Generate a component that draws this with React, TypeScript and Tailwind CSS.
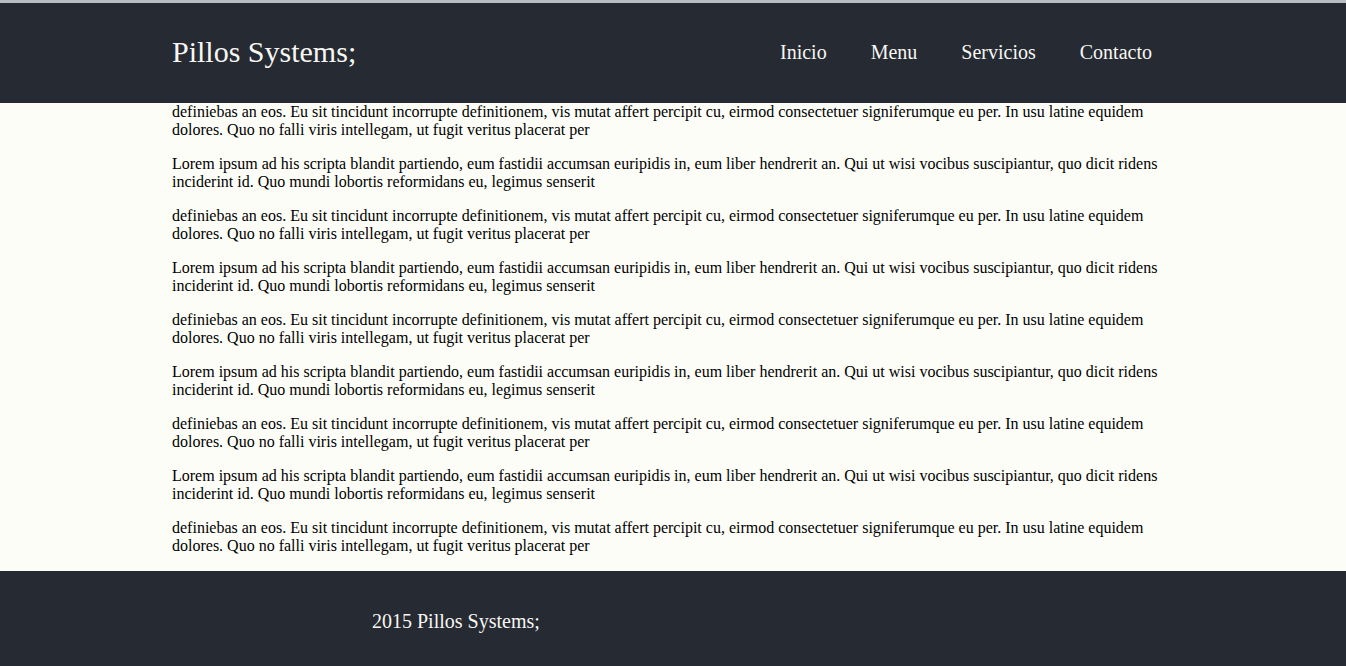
const paraA =
  'definiebas an eos. Eu sit tincidunt incorrupte definitionem, vis mutat affert percipit cu, eirmod consectetuer signiferumque eu per. In usu latine equidem dolores. Quo no falli viris intellegam, ut fugit veritus placerat per'
const paraB =
  'Lorem ipsum ad his scripta blandit partiendo, eum fastidii accumsan euripidis in, eum liber hendrerit an. Qui ut wisi vocibus suscipiantur, quo dicit ridens inciderint id. Quo mundi lobortis reformidans eu, legimus senserit'

const paragraphs = [paraA, paraB, paraA, paraB, paraA, paraB, paraA, paraB, paraA]

const links = ['Inicio', 'Menu', 'Servicios', 'Contacto']

export default function App() {
  return (
    <div className="min-h-screen bg-[#fdfdf8] font-['Liberation_Serif','Times_New_Roman',serif] text-black">
      {/* thin strip above the header */}
      <div className="h-[3px] bg-[#b9bdc2]" />

      {/* Header */}
      <header className="h-[100px] bg-[#262a33] text-[#f7f7f2]">
        <div className="mx-auto flex h-full w-[1002px] items-center justify-between pb-[2px]">
          <h1 className="text-[30px] leading-none">Pillos Systems;</h1>
          <nav>
            <ul className="flex">
              {links.map((l) => (
                <li key={l} className="px-[22px] text-[20px] leading-none">
                  {l}
                </li>
              ))}
            </ul>
          </nav>
        </div>
      </header>

      {/* Content */}
      <main className="mx-auto w-[1002px] pb-4">
        {paragraphs.map((p, i) => (
          <p key={i} className={`text-[16px] leading-[18px] ${i === 0 ? '' : 'mt-4'}`}>
            {p}
          </p>
        ))}
      </main>

      {/* Footer */}
      <footer className="h-[100px] bg-[#262a33] text-[#f7f7f2]">
        <div className="mx-auto flex h-full w-[1002px] items-center pl-[200px]">
          <p className="text-[20px] leading-none">2015 Pillos Systems;</p>
        </div>
      </footer>
    </div>
  )
}
